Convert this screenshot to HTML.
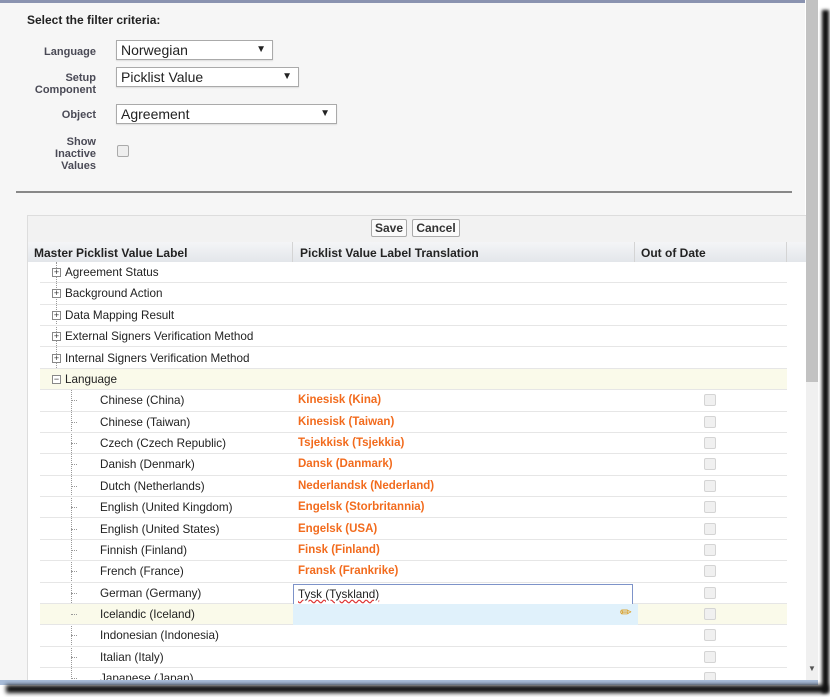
<!DOCTYPE html>
<html><head><style>
*{margin:0;padding:0;box-sizing:border-box}
body{width:830px;height:697px;overflow:hidden;background:#fff;font-family:"Liberation Sans",Arial,sans-serif;position:relative}
.abs{position:absolute}
.lbl{position:absolute;font-size:11px;font-weight:bold;color:#4a4a56;text-align:right;width:96px;left:0;line-height:12px}
.sel{position:absolute;height:20px;border:1px solid #aaa;background:#fff;font-size:14px;color:#222;padding-left:4px;line-height:18px;box-shadow:0 1px 1px #ddd}
.sel:after{content:"▼";position:absolute;right:6px;top:0;font-size:10px}
.row{position:absolute;left:40px;width:747px;height:21.37px;border-bottom:1px solid #e6e6e6;font-size:11.7px;color:#222}
.row span{position:absolute;top:4px}
.tr{color:#f26b1d;font-weight:bold;font-size:11.5px}
.cb{position:absolute;left:664px;top:4px;width:12px;height:12px;border:1px solid #d4d4d4;border-radius:2px;background:#f0f0f0}
.pl{position:absolute;left:12px;top:6px;width:9px;height:9px;border:1px solid #888;background:#fff;font-size:9px;line-height:7px;text-align:center;color:#333}
.dl{position:absolute;left:31px;top:10px;width:6px;border-top:1px dotted #999}
</style></head><body>
<div class="abs" style="left:0;top:0;width:805px;height:683px;background:#f6f6f6"></div>
<div class="abs" style="left:0;top:0;width:805px;height:3px;background:#8a93b0"></div>
<div class="abs" style="left:27px;top:13px;font-size:12px;font-weight:bold;color:#222">Select the filter criteria:</div>
<div class="lbl" style="top:46px">Language</div>
<div class="sel" style="left:116px;top:40px;width:157px">Norwegian</div>
<div class="lbl" style="top:72px">Setup<br>Component</div>
<div class="sel" style="left:116px;top:67px;width:183px">Picklist Value</div>
<div class="lbl" style="top:109px">Object</div>
<div class="sel" style="left:116px;top:104px;width:221px">Agreement</div>
<div class="lbl" style="top:136px">Show<br>Inactive<br>Values</div>
<div class="abs" style="left:117px;top:145px;width:12px;height:12px;border:1px solid #aaa;border-radius:2px;background:#eee"></div>
<div class="abs" style="left:16px;top:191px;width:776px;height:2px;background:#888"></div>
<div class="abs" style="left:27px;top:215px;width:779px;height:468px;background:#fff;border-left:1px solid #ddd"></div>
<div class="abs" style="left:28px;top:215px;width:778px;height:27px;background:#f2f2f2;border-top:1px solid #ddd"></div>
<div class="abs" style="left:371px;top:219px;width:36px;height:18px;border:1px solid #aaa;border-radius:2px;background:#fafafa;font-size:12px;font-weight:bold;text-align:center;line-height:16px;color:#333">Save</div>
<div class="abs" style="left:412px;top:219px;width:48px;height:18px;border:1px solid #aaa;border-radius:2px;background:#fafafa;font-size:12px;font-weight:bold;text-align:center;line-height:16px;color:#333">Cancel</div>
<div class="abs" style="left:28px;top:242px;width:778px;height:20px;background:linear-gradient(#f4f5f7,#e3e6ea);font-size:12px;font-weight:bold;color:#222">
<span class="abs" style="left:6px;top:4px">Master Picklist Value Label</span>
<span class="abs" style="left:264px;top:0;height:20px;border-left:1px solid #d4d4d4"></span>
<span class="abs" style="left:272px;top:4px">Picklist Value Label Translation</span>
<span class="abs" style="left:606px;top:0;height:20px;border-left:1px solid #d4d4d4"></span>
<span class="abs" style="left:613px;top:4px">Out of Date</span>
<span class="abs" style="left:758px;top:0;height:20px;border-left:1px solid #d4d4d4"></span>
</div>
<div class="abs" style="left:56px;top:262px;height:128px;border-left:1px dotted #999"></div>
<div class="abs" style="left:71px;top:390px;height:295px;border-left:1px dotted #999"></div>

<div class="row" style="top:262px"><div class="pl">+</div><span style="left:25px">Agreement Status</span></div>
<div class="row" style="top:283.4px"><div class="pl">+</div><span style="left:25px">Background Action</span></div>
<div class="row" style="top:304.7px"><div class="pl">+</div><span style="left:25px">Data Mapping Result</span></div>
<div class="row" style="top:326.1px"><div class="pl">+</div><span style="left:25px">External Signers Verification Method</span></div>
<div class="row" style="top:347.5px"><div class="pl">+</div><span style="left:25px">Internal Signers Verification Method</span></div>
<div class="row" style="top:368.9px;background:#fafaea"><div class="pl">−</div><span style="left:25px">Language</span></div>

<div class="row" style="top:390.2px"><div class="dl"></div><span style="left:60px">Chinese (China)</span><span class="tr" style="left:258px">Kinesisk (Kina)</span><div class="cb"></div></div>
<div class="row" style="top:411.6px"><div class="dl"></div><span style="left:60px">Chinese (Taiwan)</span><span class="tr" style="left:258px">Kinesisk (Taiwan)</span><div class="cb"></div></div>
<div class="row" style="top:433px"><div class="dl"></div><span style="left:60px">Czech (Czech Republic)</span><span class="tr" style="left:258px">Tsjekkisk (Tsjekkia)</span><div class="cb"></div></div>
<div class="row" style="top:454.4px"><div class="dl"></div><span style="left:60px">Danish (Denmark)</span><span class="tr" style="left:258px">Dansk (Danmark)</span><div class="cb"></div></div>
<div class="row" style="top:475.7px"><div class="dl"></div><span style="left:60px">Dutch (Netherlands)</span><span class="tr" style="left:258px">Nederlandsk (Nederland)</span><div class="cb"></div></div>
<div class="row" style="top:497.1px"><div class="dl"></div><span style="left:60px">English (United Kingdom)</span><span class="tr" style="left:258px">Engelsk (Storbritannia)</span><div class="cb"></div></div>
<div class="row" style="top:518.5px"><div class="dl"></div><span style="left:60px">English (United States)</span><span class="tr" style="left:258px">Engelsk (USA)</span><div class="cb"></div></div>
<div class="row" style="top:539.8px"><div class="dl"></div><span style="left:60px">Finnish (Finland)</span><span class="tr" style="left:258px">Finsk (Finland)</span><div class="cb"></div></div>
<div class="row" style="top:561.2px"><div class="dl"></div><span style="left:60px">French (France)</span><span class="tr" style="left:258px">Fransk (Frankrike)</span><div class="cb"></div></div>
<div class="row" style="top:582.6px"><div class="dl"></div><span style="left:60px">German (Germany)</span><div class="abs" style="left:253px;top:1px;width:340px;height:22px;border:1px solid #7d93c9;background:#fff"></div><span style="left:258px;top:5px;text-decoration:underline wavy #d33">Tysk (Tyskland)</span><div class="cb"></div></div>
<div class="row" style="top:604px;background:#fafaea"><div class="dl"></div><span style="left:60px">Icelandic (Iceland)</span><div class="abs" style="left:253px;top:0;width:345px;height:21px;background:#e0f1fb"></div><span style="left:580px;top:0;color:#d99000;font-size:14px">✏</span><div class="cb"></div></div>
<div class="row" style="top:625.3px"><div class="dl"></div><span style="left:60px">Indonesian (Indonesia)</span><div class="cb"></div></div>
<div class="row" style="top:646.7px"><div class="dl"></div><span style="left:60px">Italian (Italy)</span><div class="cb"></div></div>
<div class="row" style="top:668.1px"><div class="dl"></div><span style="left:60px">Japanese (Japan)</span><div class="cb"></div></div>

<div class="abs" style="left:806px;top:0;width:12px;height:683px;background:#f0f0f0"></div>
<div class="abs" style="left:806px;top:0;width:12px;height:382px;background:#c2c2c2"></div>
<div class="abs" style="left:808px;top:664px;font-size:8px;color:#555">▼</div>
<div class="abs" style="left:0;top:680px;width:818px;height:5px;background:#a8bcd8"></div>
<div class="abs" style="left:0;top:685px;width:830px;height:12px;background:#fff"></div>
<div class="abs" style="left:6px;top:685px;width:822px;height:8px;background:#111;filter:blur(2px)"></div>
<div class="abs" style="left:822px;top:10px;width:7px;height:683px;background:#111;filter:blur(1.5px)"></div>
</body></html>
